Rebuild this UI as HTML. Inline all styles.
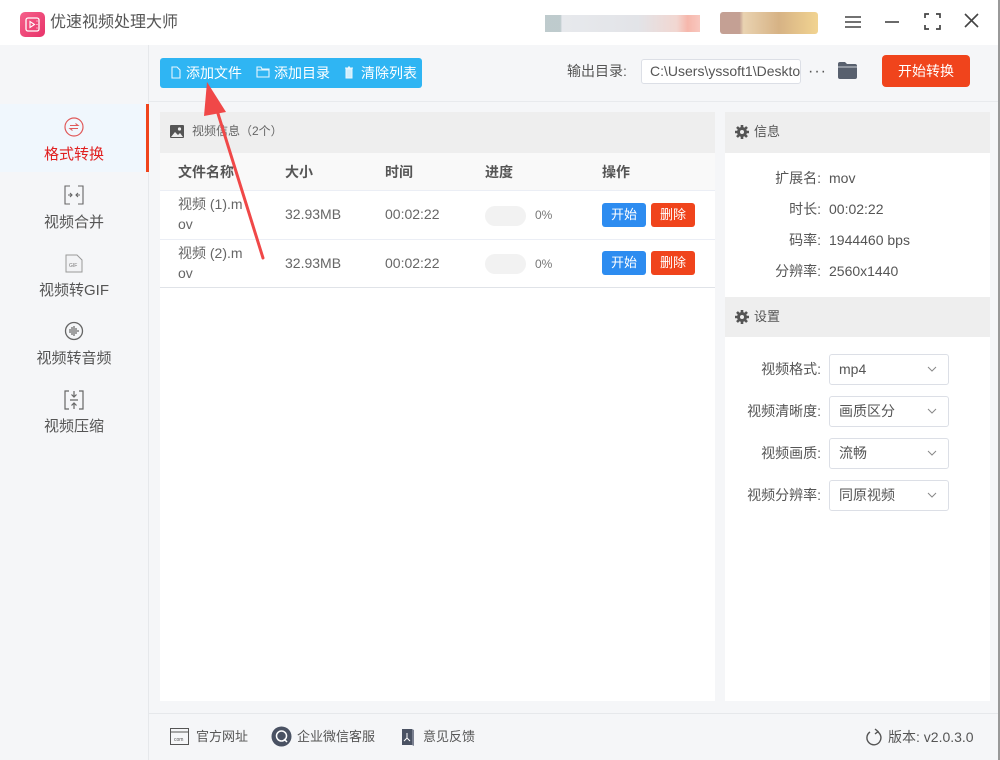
<!DOCTYPE html>
<html><head><meta charset="utf-8"><style>
*{margin:0;padding:0;box-sizing:border-box}
body{width:1000px;height:760px;overflow:hidden;background:#f5f6f8;font-family:"Liberation Sans","Noto Sans CJK SC",sans-serif;color:#333;position:relative;font-size:13px}
.a{position:absolute}
.t{white-space:nowrap;line-height:1}
</style></head><body>
<!-- title bar -->
<div class="a" style="left:0;top:0;width:1000px;height:45px;background:#fff"></div>
<div class="a" style="left:20px;top:12px;width:25px;height:25px;border-radius:5px;background:linear-gradient(135deg,#f5608a,#e8336a)">
<svg width="25" height="25" viewBox="0 0 25 25"><rect x="6" y="6" width="13" height="13" rx="2" fill="none" stroke="#fff" stroke-width="1.3"/><path d="M10 9.5v6l4.5-3z" fill="none" stroke="#fff" stroke-width="1.1"/><path d="M16.5 9h1M16.5 12.5h1M16.5 16h1" stroke="#fff"/></svg></div>
<div class="a t" style="left:50px;top:15px;font-size:16px;color:#555">优速视频处理大师</div>
<div class="a" style="left:545px;top:15px;width:155px;height:17px;background:linear-gradient(90deg,#a3b5b8 0,#a3b5b8 10%,#dde0e5 11%,#d6d8de 60%,#ecc5bd 85%,#f29888 92%,#f5b0a4 100%);opacity:.7"></div>
<div class="a" style="left:720px;top:12px;width:98px;height:22px;background:linear-gradient(90deg,#b08070 0,#b08070 20%,#e2c497 24%,#c9995c 60%,#edc56c 100%);opacity:.75;border-radius:3px"></div>
<svg class="a" style="left:844px;top:14px" width="18" height="16"><path d="M1 3h16M1 8h16M1 13h16" stroke="#444" stroke-width="1.6"/></svg>
<svg class="a" style="left:884px;top:14px" width="16" height="16"><path d="M1 8h14" stroke="#444" stroke-width="1.6"/></svg>
<svg class="a" style="left:924px;top:13px" width="17" height="17"><path d="M1 5V1h4M12 1h4v4M16 12v4h-4M5 16H1v-4" fill="none" stroke="#444" stroke-width="1.7"/></svg>
<svg class="a" style="left:964px;top:13px" width="15" height="15"><path d="M1 1l13 13M14 1L1 14" stroke="#444" stroke-width="1.6"/></svg>
<div class="a" style="left:998px;top:0;width:2px;height:760px;background:#999"></div>
<!-- sidebar -->
<div class="a" style="left:148px;top:45px;width:1px;height:715px;background:#e6e8eb"></div>
<div class="a" style="left:0;top:104px;width:146px;height:68px;background:#f0f7fd"></div>
<div class="a" style="left:146px;top:104px;width:3px;height:68px;background:#f0441c"></div>
<svg class="a" style="left:64px;top:117px" width="20" height="20"><circle cx="10" cy="10" r="9" fill="none" stroke="#e05a5a" stroke-width="1.2"/><path d="M6 8.5h8l-2.5-2M14 11.5H6l2.5 2" fill="none" stroke="#e05a5a" stroke-width="1.1"/></svg>
<div class="a t" style="left:0;width:148px;text-align:center;top:147px;font-size:15px;color:#e02020">格式转换</div>
<svg class="a" style="left:64px;top:185px" width="20" height="20"><path d="M6 1H1v18h5M14 1h5v18h-5M4 10h4M6 8l2 2-2 2M16 10h-4M14 8l-2 2 2 2" fill="none" stroke="#666" stroke-width="1.1"/></svg>
<div class="a t" style="left:0;width:148px;text-align:center;top:215px;font-size:15px;color:#555">视频合并</div>
<svg class="a" style="left:65px;top:254px" width="18" height="19"><path d="M1 1h11l5 5v12H1z" fill="#f2f3f5" stroke="#999" stroke-width="1"/><text x="4" y="13" font-size="5" fill="#777" font-family="Liberation Sans">GIF</text></svg>
<div class="a t" style="left:0;width:148px;text-align:center;top:283px;font-size:15px;color:#555">视频转GIF</div>
<svg class="a" style="left:64px;top:321px" width="20" height="20"><circle cx="10" cy="10" r="8.5" fill="none" stroke="#666" stroke-width="1.3"/><path d="M6 8v4M8 6v8M10 5v10M12 7v6M14 9v2" stroke="#666" stroke-width="1.2"/></svg>
<div class="a t" style="left:0;width:148px;text-align:center;top:351px;font-size:15px;color:#555">视频转音频</div>
<svg class="a" style="left:64px;top:390px" width="20" height="20"><path d="M5 1H1v18h4M15 1h4v18h-4M10 1v6M7.5 4.5L10 7l2.5-2.5M10 19v-6M7.5 15.5L10 13l2.5 2.5M6 10h8" fill="none" stroke="#666" stroke-width="1.2"/></svg>
<div class="a t" style="left:0;width:148px;text-align:center;top:419px;font-size:15px;color:#555">视频压缩</div>
<!-- toolbar -->
<div class="a" style="left:160px;top:58px;width:262px;height:30px;background:#2fb5f3;border-radius:3px"></div>
<svg class="a" style="left:171px;top:66px" width="10" height="13"><path d="M1 1h5l3 3v8H1z" fill="none" stroke="#e8f6fe" stroke-width="1.1"/></svg>
<div class="a t" style="left:186px;top:66px;font-size:14px;color:#fff">添加文件</div>
<svg class="a" style="left:256px;top:66px" width="14" height="12"><path d="M1 1h4l1 2h7v8H1z" fill="none" stroke="#e8f6fe" stroke-width="1.1"/><path d="M1 4h12" stroke="#e8f6fe"/></svg>
<div class="a t" style="left:274px;top:66px;font-size:14px;color:#fff">添加目录</div>
<svg class="a" style="left:344px;top:66px" width="10" height="13"><path d="M2 3h6v9H2zM1 2h8M4 1h2" fill="#cfeefc" stroke="#e8f6fe"/></svg>
<div class="a t" style="left:361px;top:66px;font-size:14px;color:#fff">清除列表</div>
<div class="a t" style="left:567px;top:64px;font-size:14px;color:#555">输出目录:</div>
<div class="a t" style="left:641px;top:59px;width:160px;height:25px;border:1px solid #dcdfe6;border-radius:3px;background:#fff;overflow:hidden;padding:0 0 0 8px;line-height:23px;font-size:14px;color:#555">C:\Users\yssoft1\Desktop</div>
<div class="a t" style="left:808px;top:64px;font-size:16px;color:#555;letter-spacing:1px">···</div>
<svg class="a" style="left:837px;top:61px" width="21" height="19"><path d="M1 3q0-2 2-2h5l2 2h8q2 0 2 2v11q0 2-2 2H3q-2 0-2-2z" fill="#58606e"/><path d="M1 6h19" stroke="#f5f6f8" stroke-width=".8"/></svg>
<div class="a t" style="left:882px;top:55px;width:88px;height:32px;background:#f0441c;border-radius:4px;color:#fff;font-size:14px;text-align:center;line-height:32px">开始转换</div>
<div class="a" style="left:149px;top:101px;width:849px;height:1px;background:#e8eaed"></div>
<!-- left panel -->
<div class="a" style="left:160px;top:112px;width:555px;height:589px;background:#fff"></div>
<div class="a" style="left:160px;top:112px;width:555px;height:41px;background:#eeeeee"></div>
<svg class="a" style="left:170px;top:125px" width="14" height="13"><rect width="14" height="13" rx="1" fill="#555"/><circle cx="9.5" cy="4" r="1.6" fill="#eee"/><path d="M1 12l4-5 3 3 2-2 3 4z" fill="#eee"/></svg>
<div class="a t" style="left:192px;top:125px;font-size:12px;color:#666">视频信息（2个）</div>
<div class="a" style="left:160px;top:153px;width:555px;height:38px;background:#f9f9f9;border-bottom:1px solid #ebeef5"></div>
<div class="a t" style="left:178px;top:165px;font-size:14px;font-weight:bold;color:#555">文件名称</div>
<div class="a t" style="left:285px;top:165px;font-size:14px;font-weight:bold;color:#555">大小</div>
<div class="a t" style="left:385px;top:165px;font-size:14px;font-weight:bold;color:#555">时间</div>
<div class="a t" style="left:485px;top:165px;font-size:14px;font-weight:bold;color:#555">进度</div>
<div class="a t" style="left:602px;top:165px;font-size:14px;font-weight:bold;color:#555">操作</div>
<div class="a" style="left:160px;top:239px;width:555px;height:1px;background:#ebeef5"></div>
<div class="a" style="left:160px;top:287px;width:555px;height:1px;background:#e0e3e8"></div>
<div class="a t" style="left:178px;top:194px;font-size:14px;color:#666;line-height:20px">视频 (1).m<br>ov</div>
<div class="a t" style="left:178px;top:243px;font-size:14px;color:#666;line-height:20px">视频 (2).m<br>ov</div>
<div class="a t" style="left:285px;top:207px;font-size:14px;color:#666">32.93MB</div>
<div class="a t" style="left:285px;top:256px;font-size:14px;color:#666">32.93MB</div>
<div class="a t" style="left:385px;top:207px;font-size:14px;color:#666">00:02:22</div>
<div class="a t" style="left:385px;top:256px;font-size:14px;color:#666">00:02:22</div>
<div class="a" style="left:485px;top:206px;width:41px;height:20px;border-radius:10px;background:#f2f2f2"></div>
<div class="a" style="left:485px;top:254px;width:41px;height:20px;border-radius:10px;background:#f2f2f2"></div>
<div class="a t" style="left:535px;top:209px;font-size:12px;color:#777">0%</div>
<div class="a t" style="left:535px;top:258px;font-size:12px;color:#777">0%</div>
<div class="a t" style="left:602px;top:203px;width:44px;height:24px;background:#2d8cf0;border-radius:3px;color:#fff;font-size:13px;text-align:center;line-height:24px">开始</div>
<div class="a t" style="left:651px;top:203px;width:44px;height:24px;background:#f0441c;border-radius:3px;color:#fff;font-size:13px;text-align:center;line-height:24px">删除</div>
<div class="a t" style="left:602px;top:251px;width:44px;height:24px;background:#2d8cf0;border-radius:3px;color:#fff;font-size:13px;text-align:center;line-height:24px">开始</div>
<div class="a t" style="left:651px;top:251px;width:44px;height:24px;background:#f0441c;border-radius:3px;color:#fff;font-size:13px;text-align:center;line-height:24px">删除</div>
<!-- right panel -->
<div class="a" style="left:725px;top:112px;width:265px;height:589px;background:#fff"></div>
<div class="a" style="left:725px;top:112px;width:265px;height:41px;background:#eeeeee"></div>
<div class="a" style="left:725px;top:297px;width:265px;height:40px;background:#eeeeee"></div>
<svg class="a" style="left:735px;top:125px" width="14" height="14" viewBox="0 0 14 14"><circle cx="7" cy="7" r="5" fill="#555"/><path d="M7 0v14M0 7h14M2 2l10 10M12 2L2 12" stroke="#555" stroke-width="2.6"/><circle cx="7" cy="7" r="2" fill="#eee"/></svg>
<div class="a t" style="left:754px;top:125px;font-size:13px;color:#555">信息</div>
<svg class="a" style="left:735px;top:310px" width="14" height="14" viewBox="0 0 14 14"><circle cx="7" cy="7" r="5" fill="#555"/><path d="M7 0v14M0 7h14M2 2l10 10M12 2L2 12" stroke="#555" stroke-width="2.6"/><circle cx="7" cy="7" r="2" fill="#eee"/></svg>
<div class="a t" style="left:754px;top:310px;font-size:13px;color:#555">设置</div>
<div class="a t" style="left:729px;width:92px;text-align:right;top:171px;font-size:14px;color:#555">扩展名:</div>
<div class="a t" style="left:729px;width:92px;text-align:right;top:202px;font-size:14px;color:#555">时长:</div>
<div class="a t" style="left:729px;width:92px;text-align:right;top:233px;font-size:14px;color:#555">码率:</div>
<div class="a t" style="left:729px;width:92px;text-align:right;top:264px;font-size:14px;color:#555">分辨率:</div>
<div class="a t" style="left:829px;top:171px;font-size:14px;color:#555">mov</div>
<div class="a t" style="left:829px;top:202px;font-size:14px;color:#555">00:02:22</div>
<div class="a t" style="left:829px;top:233px;font-size:14px;color:#555">1944460 bps</div>
<div class="a t" style="left:829px;top:264px;font-size:14px;color:#555">2560x1440</div>
<div class="a t" style="left:729px;width:92px;text-align:right;top:362px;font-size:14px;color:#555">视频格式:</div>
<div class="a t" style="left:729px;width:92px;text-align:right;top:404px;font-size:14px;color:#555">视频清晰度:</div>
<div class="a t" style="left:729px;width:92px;text-align:right;top:446px;font-size:14px;color:#555">视频画质:</div>
<div class="a t" style="left:729px;width:92px;text-align:right;top:488px;font-size:14px;color:#555">视频分辨率:</div>
<div class="a t" style="left:829px;top:354px;width:120px;height:31px;border:1px solid #dcdfe6;border-radius:3px;padding:0 9px;line-height:29px;font-size:14px;color:#555">mp4</div>
<div class="a t" style="left:829px;top:396px;width:120px;height:31px;border:1px solid #dcdfe6;border-radius:3px;padding:0 9px;line-height:29px;font-size:14px;color:#555">画质区分</div>
<div class="a t" style="left:829px;top:438px;width:120px;height:31px;border:1px solid #dcdfe6;border-radius:3px;padding:0 9px;line-height:29px;font-size:14px;color:#555">流畅</div>
<div class="a t" style="left:829px;top:480px;width:120px;height:31px;border:1px solid #dcdfe6;border-radius:3px;padding:0 9px;line-height:29px;font-size:14px;color:#555">同原视频</div>
<svg class="a" style="left:927px;top:366px" width="10" height="6"><path d="M1 1l4 4 4-4" fill="none" stroke="#888"/></svg>
<svg class="a" style="left:927px;top:408px" width="10" height="6"><path d="M1 1l4 4 4-4" fill="none" stroke="#888"/></svg>
<svg class="a" style="left:927px;top:450px" width="10" height="6"><path d="M1 1l4 4 4-4" fill="none" stroke="#888"/></svg>
<svg class="a" style="left:927px;top:492px" width="10" height="6"><path d="M1 1l4 4 4-4" fill="none" stroke="#888"/></svg>
<!-- footer -->
<div class="a" style="left:149px;top:713px;width:849px;height:1px;background:#e6e8eb"></div>
<svg class="a" style="left:170px;top:728px" width="19" height="17"><rect x=".5" y=".5" width="18" height="16" fill="none" stroke="#555"/><path d="M1 4h17" stroke="#555"/><text x="4" y="13" font-size="5" fill="#555" font-family="Liberation Sans">com</text></svg>
<div class="a t" style="left:196px;top:730px;font-size:13px;color:#555">官方网址</div>
<svg class="a" style="left:271px;top:726px" width="21" height="21"><circle cx="10.5" cy="10.5" r="10" fill="#4a5263"/><circle cx="10.5" cy="10" r="5" fill="none" stroke="#fff" stroke-width="1.5"/><path d="M13 13l3 3" stroke="#fff" stroke-width="1.5"/></svg>
<div class="a t" style="left:297px;top:730px;font-size:13px;color:#555">企业微信客服</div>
<svg class="a" style="left:401px;top:727px" width="14" height="19"><path d="M1 2h10v16H1z" fill="#4a5263"/><path d="M11 2l2 1v16l-2-1" fill="#7a8090"/><path d="M6 6v5l-3 3M6 11l3 3" stroke="#fff" fill="none"/></svg>
<div class="a t" style="left:423px;top:730px;font-size:13px;color:#555">意见反馈</div>
<svg class="a" style="left:866px;top:728px" width="16" height="18"><path d="M11 3.5A7 7 0 1 1 4 4" fill="none" stroke="#555" stroke-width="1.4"/><path d="M9 1l3 2.5-3 2.5" fill="none" stroke="#555" stroke-width="1.4"/></svg>
<div class="a t" style="left:888px;top:730px;font-size:14px;color:#555">版本: v2.0.3.0</div>
<!-- red arrow -->
<svg class="a" style="left:0;top:0" width="1000" height="760"><path d="M263 258L215 104" stroke="#f04848" stroke-width="3" stroke-linecap="round"/><path d="M207 82L226 112L204 116Z" fill="#f04848"/></svg>
</body></html>
